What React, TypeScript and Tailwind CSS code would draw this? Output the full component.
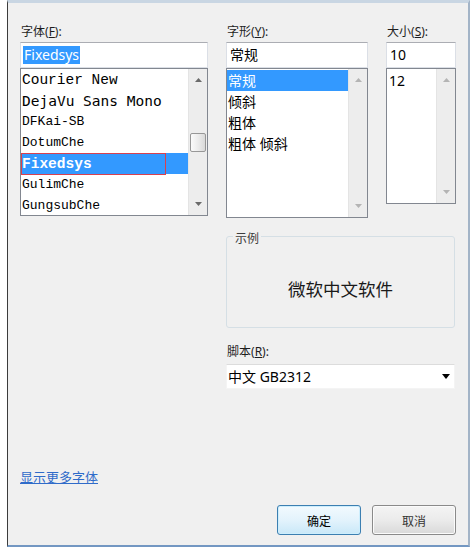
import React from 'react';

const ui = "font-['Noto_Sans','Noto_Sans_CJK_SC',sans-serif]";

const Arrow: React.FC<{ down?: boolean; dim?: boolean }> = ({ down, dim }) => (
  <svg width="7" height="4" viewBox="0 0 7 4" className="block">
    <path d={down ? 'M0 0 L7 0 L3.5 4 Z' : 'M0 4 L7 4 L3.5 0 Z'} fill={dim ? '#b4b4b4' : '#6a6a6a'} />
  </svg>
);

// Win7 style vertical scrollbar
const ScrollBar: React.FC<{ thumbTop?: number; dim?: boolean }> = ({ thumbTop, dim }) => (
  <div className="relative w-[19px] shrink-0 bg-[#ededed] border-l border-[#e4e4e4] flex flex-col items-center justify-between py-[9px]">
    <Arrow dim={dim} />
    <Arrow down dim={dim} />
    {thumbTop !== undefined && (
      <div
        className="absolute left-[1px] w-[16px] h-[19px] rounded-[2px] border border-[#979797] bg-gradient-to-r from-[#fbfbfb] via-[#ececec] to-[#d9d9d9]"
        style={{ top: thumbTop }}
      />
    )}
  </div>
);

const fonts = [
  { name: 'Courier New', cls: "font-['Liberation_Mono',monospace] text-[14.5px]" },
  { name: 'DejaVu Sans Mono', cls: "font-['DejaVu_Sans_Mono',monospace] text-[14.5px]" },
  { name: 'DFKai-SB', cls: "font-['Liberation_Mono',monospace] text-[13px]" },
  { name: 'DotumChe', cls: "font-['Liberation_Mono',monospace] text-[13px]" },
  { name: 'Fixedsys', cls: "font-['Liberation_Mono',monospace] text-[14.5px] font-bold", selected: true },
  { name: 'GulimChe', cls: "font-['Liberation_Mono',monospace] text-[13px]" },
  { name: 'GungsubChe', cls: "font-['Liberation_Mono',monospace] text-[13px]" },
];

const styles = ['常规', '倾斜', '粗体', '粗体 倾斜'];

const Label: React.FC<{ text: string; hot: string }> = ({ text, hot }) => (
  <div className={`${ui} text-[12px] leading-[16px] text-[#1e1e1e] pl-[1px]`}>
    {text}(<span className="underline">{hot}</span>):
  </div>
);

const TextBox: React.FC<{ children: React.ReactNode }> = ({ children }) => (
  <div className="h-[26px] bg-white border border-[#dbdfe6] border-t-[#abadb3] flex items-center pl-[2px]">
    {children}
  </div>
);

export default function App() {
  return (
    <div className="w-[473px] h-[548px] bg-white overflow-hidden">
      <div className="ml-[7px] w-[463px] h-[547px] bg-[#f0f0f0] border-l border-l-[#3c3c3c] border-t-[3px] border-t-[#c9d6e3] border-r-[2px] border-r-[#a3b4c7] border-b-[2px] border-b-[#7397c2] pl-[12px] pr-[12px] pt-[21px] flex flex-col">
        {/* top row: font / style / size */}
        <div className="flex items-start gap-[18px]">
          <div className="w-[188px]">
            <Label text="字体" hot="F" />
            <div className="mt-[2px]">
              <TextBox>
                <span className={`${ui} text-[14px] leading-[18px] bg-[#3399ff] text-white px-[1px]`}>Fixedsys</span>
              </TextBox>
            </div>
            <div className="h-[148px] bg-white border border-[#828790] flex overflow-hidden">
              <div className="flex-1">
                {fonts.map((f) => (
                  <div
                    key={f.name}
                    className={`relative h-[21px] flex items-center pl-[1px] ${f.selected ? 'bg-[#3399ff] text-white' : 'text-black'}`}
                  >
                    <span className={`${f.cls} leading-[18px] whitespace-nowrap`}>{f.name}</span>
                    {f.selected && (
                      <span className="absolute left-0 top-0 w-[145px] h-[22px] border border-[#d8404f]" />
                    )}
                  </div>
                ))}
              </div>
              <ScrollBar thumbTop={64} />
            </div>
          </div>

          <div className="w-[142px]">
            <Label text="字形" hot="Y" />
            <div className="mt-[2px]">
              <TextBox>
                <span className={`${ui} text-[14px] leading-[18px] text-black pl-[1px]`}>常规</span>
              </TextBox>
            </div>
            <div className="h-[150px] bg-white border border-[#828790] flex overflow-hidden">
              <div className="flex-1 pt-[1px]">
                {styles.map((s, i) => (
                  <div
                    key={s}
                    className={`h-[21px] flex items-center pl-[1px] ${ui} text-[14px] leading-[18px] ${i === 0 ? 'bg-[#3399ff] text-white' : 'text-black'}`}
                  >
                    {s}
                  </div>
                ))}
              </div>
              <ScrollBar dim />
            </div>
          </div>

          <div className="w-[70px]">
            <Label text="大小" hot="S" />
            <div className="mt-[2px]">
              <TextBox>
                <span className={`${ui} text-[14px] leading-[18px] text-black pl-[1px]`}>10</span>
              </TextBox>
            </div>
            <div className="h-[136px] bg-white border border-[#828790] flex overflow-hidden">
              <div className="flex-1 pt-[1px]">
                <div className={`h-[21px] flex items-center pl-[2px] ${ui} text-[14px] leading-[18px] text-black`}>12</div>
              </div>
              <ScrollBar dim />
            </div>
          </div>
        </div>

        {/* sample + script */}
        <div className="ml-[206px] w-[229px]">
          <div className="relative mt-[18px] h-[92px] border border-[#d5dfe5] rounded-[3px] flex justify-center pt-[40px]">
            <span className={`absolute left-[6px] top-[-5px] bg-[#f0f0f0] px-[2px] ${ui} text-[12px] leading-[14px] text-[#3c3c3c]`}>
              示例
            </span>
            <span className={`${ui} text-[17.5px] leading-[24px] text-[#1a1a1a]`}>微软中文软件</span>
          </div>

          <div className="mt-[16px]">
            <Label text="脚本" hot="R" />
          </div>
          <div className="mt-[4px] h-[25px] bg-white border border-[#f4f4f4] border-t-[#dcdcdc] flex items-center justify-between pl-[1px] pr-[4px]">
            <span className={`${ui} text-[14px] leading-[18px] text-black`}>中文 GB2312</span>
            <svg width="8" height="5" viewBox="0 0 8 5">
              <path d="M0 0 L8 0 L4 5 Z" fill="#000" />
            </svg>
          </div>
        </div>

        {/* link */}
        <div className={`mt-[80px] ${ui} text-[13px] leading-[16px] h-[16px]`}>
          <span className="text-[#2f6bc9] underline">显示更多字体</span>
        </div>

        {/* buttons */}
        <div className="mt-[20px] flex justify-end gap-[11px]">
          <button className="w-[84px] h-[30px] rounded-[3px] border border-[#3c7fb1] bg-gradient-to-b from-[#f2fafe] via-[#e3f3fc] to-[#c9e8f8] shadow-[inset_0_0_0_1px_#cdeefd]">
            <span className={`${ui} text-[12px] leading-[16px] text-black`}>确定</span>
          </button>
          <button className="w-[84px] h-[30px] rounded-[3px] border border-[#8a8a8a] bg-gradient-to-b from-[#f4f4f4] via-[#ebebeb] to-[#d9d9d9] shadow-[inset_0_0_0_1px_#fbfbfb]">
            <span className={`${ui} text-[12px] leading-[16px] text-[#333]`}>取消</span>
          </button>
        </div>
      </div>
    </div>
  );
}
